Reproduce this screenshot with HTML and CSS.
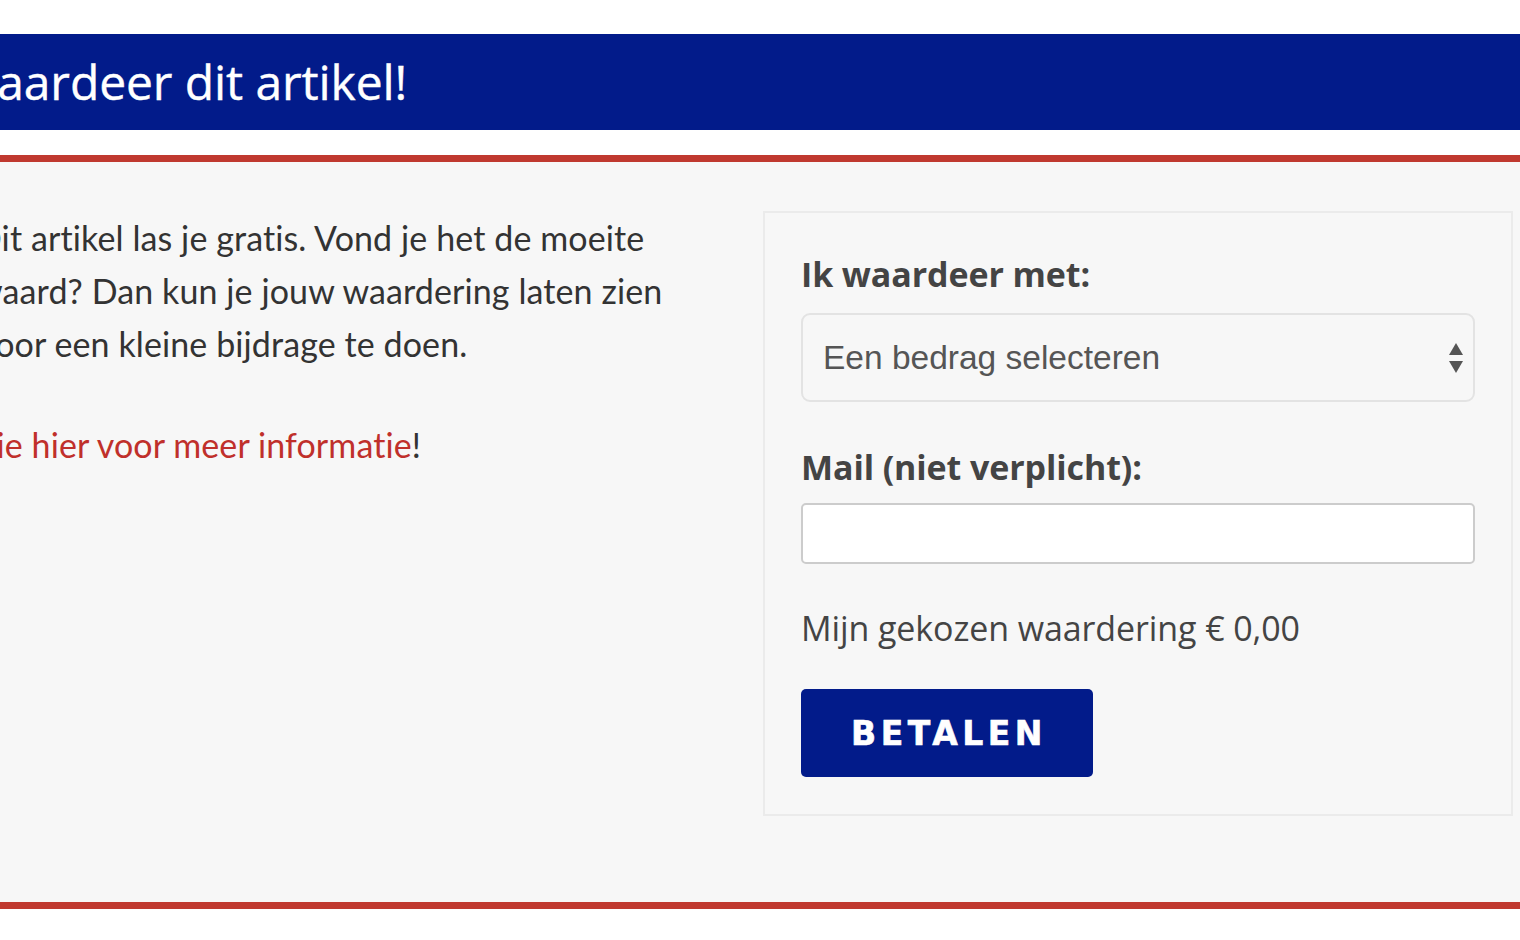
FILE: index.html
```html
<!DOCTYPE html>
<html lang="nl">
<head>
<meta charset="utf-8">
<title>Waardeer dit artikel</title>
<link rel="stylesheet" href="styles.css">
</head>
<body>
<div class="page">
  <header class="banner">
    <h2 class="banner-title">Waardeer dit artikel!</h2>
  </header>
  <section class="support">
    <div class="support-text">
      <p class="intro">Dit artikel las je gratis. Vond je het de moeite waard? Dan kun je jouw waardering laten zien door een kleine bijdrage te doen.</p>
      <p class="more"><a class="more-link" href="#">Zie hier voor meer informatie</a>!</p>
    </div>
    <form class="pay-box">
      <label class="field-label" for="amount">Ik waardeer met:</label>
      <div class="select-wrap">
        <select id="amount" class="select">
          <option>Een bedrag selecteren</option>
        </select>
        <svg class="select-arrows" viewBox="0 0 16 32" width="16" height="32" aria-hidden="true">
          <polygon points="8,1 15,13 1,13" fill="#555"/>
          <polygon points="1,19 15,19 8,31" fill="#555"/>
        </svg>
      </div>
      <label class="field-label field-label--mail" for="mail">Mail (niet verplicht):</label>
      <input id="mail" class="input" type="text">
      <p class="chosen">Mijn gekozen waardering € 0,00</p>
      <button class="pay-button" type="button">BETALEN</button>
    </form>
  </section>
</div>
</body>
</html>
```

FILE: styles.css
```css
html, body {
  margin: 0;
  padding: 0;
  background: #ffffff;
  overflow: hidden;
}

.page {
  width: 1520px;
  height: 940px;
  padding-top: 34px;
  box-sizing: border-box;
}

.banner {
  background: #021b8a;
  height: 96px;
  display: flex;
  align-items: center;
}

.banner-title {
  margin: 0 0 0 -47px;
  font-family: "Open Sans", "Noto Sans", sans-serif;
  font-weight: 400;
  font-size: 48px;
  line-height: 96px;
  color: #ffffff;
  letter-spacing: -0.1px;
  -webkit-text-stroke: 0.4px #ffffff;
}

.support {
  margin-top: 25px;
  background: #f7f7f7;
  border-top: 7px solid #c0392f;
  border-bottom: 7px solid #c0392f;
  padding: 49px 7px 86px 0;
  display: grid;
  grid-template-columns: 1fr 750px;
  column-gap: 96px;
}

.support-text {
  margin-left: -24px;
}

.intro,
.more {
  margin: 0;
  font-family: "Lato", "Noto Sans", sans-serif;
  font-size: 34px;
  line-height: 53px;
  color: #333333;
  font-variant-ligatures: none;
  letter-spacing: 0.1px;
}

.more {
  margin-top: 48px;
}

.more-link {
  color: #c0302b;
  text-decoration: none;
}

.pay-box {
  border: 2px solid #ebebeb;
  padding: 41px 36px 37px;
  display: flex;
  flex-direction: column;
  align-items: flex-start;
}

.field-label {
  font-family: "Open Sans", "Noto Sans", sans-serif;
  font-weight: 700;
  font-size: 34px;
  line-height: 40px;
  color: #444444;
  letter-spacing: -0.1px;
}

.field-label--mail {
  margin-top: 45px;
}

.select-wrap {
  position: relative;
  margin-top: 19px;
  width: 100%;
}

.select {
  -webkit-appearance: none;
  appearance: none;
  width: 100%;
  height: 89px;
  border: 2px solid #e3e3e3;
  border-radius: 9px;
  background: #f7f7f7;
  padding: 0 20px;
  font-family: "Liberation Sans", Arial, sans-serif;
  font-size: 33.5px;
  color: #555555;
  box-sizing: border-box;
  display: block;
}

.select-arrows {
  position: absolute;
  right: 11px;
  top: 29px;
}

.input {
  margin-top: 16px;
  width: 100%;
  height: 61px;
  box-sizing: border-box;
  border: 2px solid #cccccc;
  border-radius: 5px;
  background: #ffffff;
  display: block;
}

.chosen {
  margin: 44px 0 0;
  font-family: "Open Sans", "Noto Sans", sans-serif;
  font-weight: 400;
  font-size: 34px;
  line-height: 40px;
  color: #444444;
  letter-spacing: -0.1px;
}

.pay-button {
  margin-top: 41px;
  width: 292px;
  height: 88px;
  border: 0;
  border-radius: 5px;
  background: #021b8a;
  color: #ffffff;
  font-family: "DejaVu Sans", sans-serif;
  font-weight: 700;
  font-size: 33px;
  letter-spacing: 4.5px;
  padding: 0 0 0 4px;
  -webkit-text-stroke: 0.6px #ffffff;
}
```
